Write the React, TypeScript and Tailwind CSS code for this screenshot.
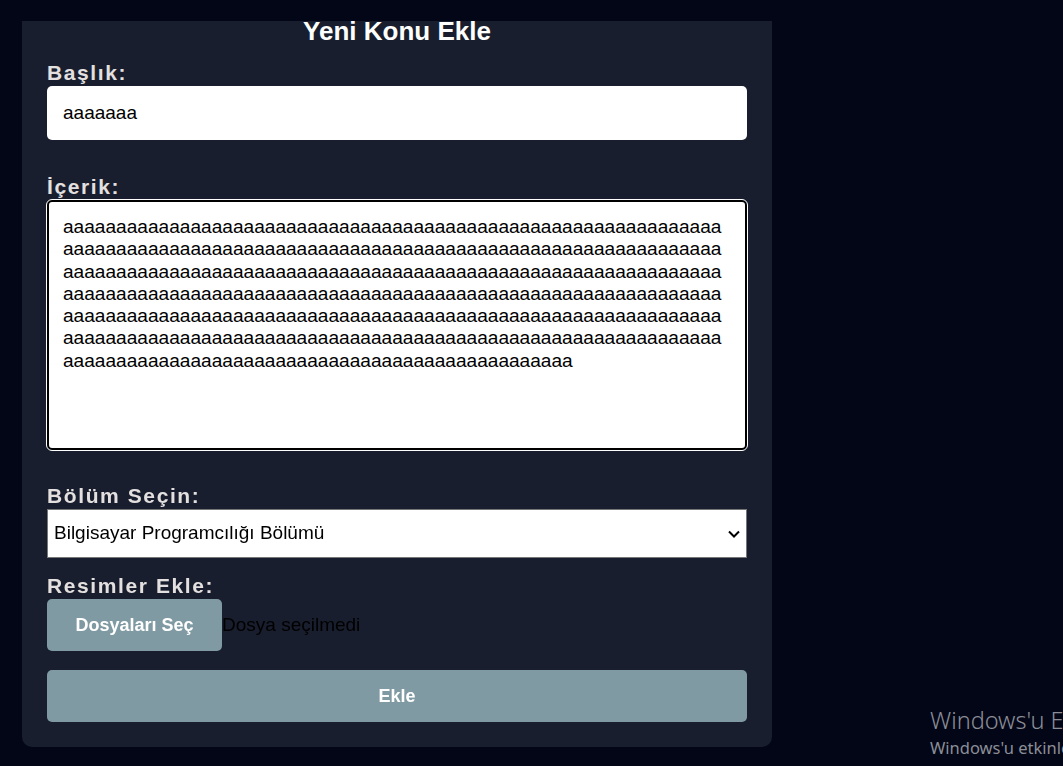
import { useEffect, useRef } from "react";

const bodyText = "a".repeat(62 * 6 + 48);

function ChevronDown() {
  return (
    <svg
      viewBox="0 0 12 8"
      className="pointer-events-none absolute right-[7px] top-1/2 h-[8px] w-[12px] -translate-y-1/2"
      fill="none"
      stroke="#000"
      strokeWidth="2"
    >
      <path d="M1 1.5 6 6.5 11 1.5" />
    </svg>
  );
}

function FieldLabel({ children }: { children: string }) {
  return (
    <label className="block h-[24px] text-[21px] font-bold leading-[24px] tracking-[1.6px] text-[#e4e0e0]">
      {children}
    </label>
  );
}

export default function App() {
  const areaRef = useRef<HTMLTextAreaElement>(null);

  useEffect(() => {
    const area = areaRef.current;
    if (!area) {
      return;
    }
    area.focus();
    area.setSelectionRange(bodyText.length, bodyText.length);
  }, []);

  return (
    <div
      className="relative flex h-screen flex-col overflow-hidden bg-[#030617]"
      style={{ fontFamily: '"Liberation Sans", Arial, sans-serif' }}
    >
      <div className="h-[21px] shrink-0" />

      <div className="min-h-0 flex-1 overflow-hidden">
        <form className="-mt-[27px] ml-[22px] w-[750px] rounded-[10px] bg-[#181e2d] px-[25px] pb-[25px] pt-[22px]">
          <h2 className="mb-[15px] h-[30px] text-center text-[26px] font-bold leading-[30px] text-white">
            Yeni Konu Ekle
          </h2>

          <FieldLabel>Başlık:</FieldLabel>
          <input
            type="text"
            defaultValue="aaaaaaa"
            className="mt-[1px] block h-[54px] w-full rounded-[5px] bg-white px-[16px] text-[19px] text-black outline-none"
          />

          <div className="mt-[35px]">
            <FieldLabel>İçerik:</FieldLabel>
          </div>
          <textarea
            ref={areaRef}
            defaultValue={bodyText}
            spellCheck={false}
            className="mt-[1px] block h-[250px] w-full resize-none rounded-[5px] border-2 border-black bg-white px-[14px] py-[14px] text-[19.1px] leading-[22.3px] text-black caret-black outline outline-1 outline-white"
          />

          <div className="mt-[34px]">
            <FieldLabel>Bölüm Seçin:</FieldLabel>
          </div>
          <div className="relative mt-[1px]">
            <select
              defaultValue="bp"
              className="block h-[49px] w-full appearance-none border border-[#767676] bg-white pl-[6px] text-[19px] text-black outline-none"
            >
              <option value="bp">Bilgisayar Programcılığı Bölümü</option>
              <option value="el">Elektronik Bölümü</option>
              <option value="mk">Makine Bölümü</option>
            </select>
            <ChevronDown />
          </div>

          <div className="mt-[16px]">
            <FieldLabel>Resimler Ekle:</FieldLabel>
          </div>
          <div className="mt-[1px] flex items-center">
            <button
              type="button"
              className="h-[52px] w-[175px] rounded-[5px] bg-[#809aa3] text-[18px] font-bold text-white"
            >
              Dosyaları Seç
            </button>
            <span className="text-[19px] text-black">Dosya seçilmedi</span>
          </div>

          <button
            type="button"
            className="mt-[19px] block h-[52px] w-full rounded-[5px] bg-[#809aa3] text-[18px] font-bold text-white"
          >
            Ekle
          </button>
        </form>
      </div>

      <div
        className="pointer-events-none absolute left-[930px] top-[703px] whitespace-nowrap text-[#8b8e96]"
        style={{ fontFamily: '"Noto Sans", "Open Sans", sans-serif' }}
      >
        <p className="text-[23.5px] font-light leading-[34px]">Windows'u Etkinleştir</p>
        <p className="text-[16.5px] leading-[22px]">
          Windows'u etkinleştirmek için Ayarlar'a gidin.
        </p>
      </div>
    </div>
  );
}
